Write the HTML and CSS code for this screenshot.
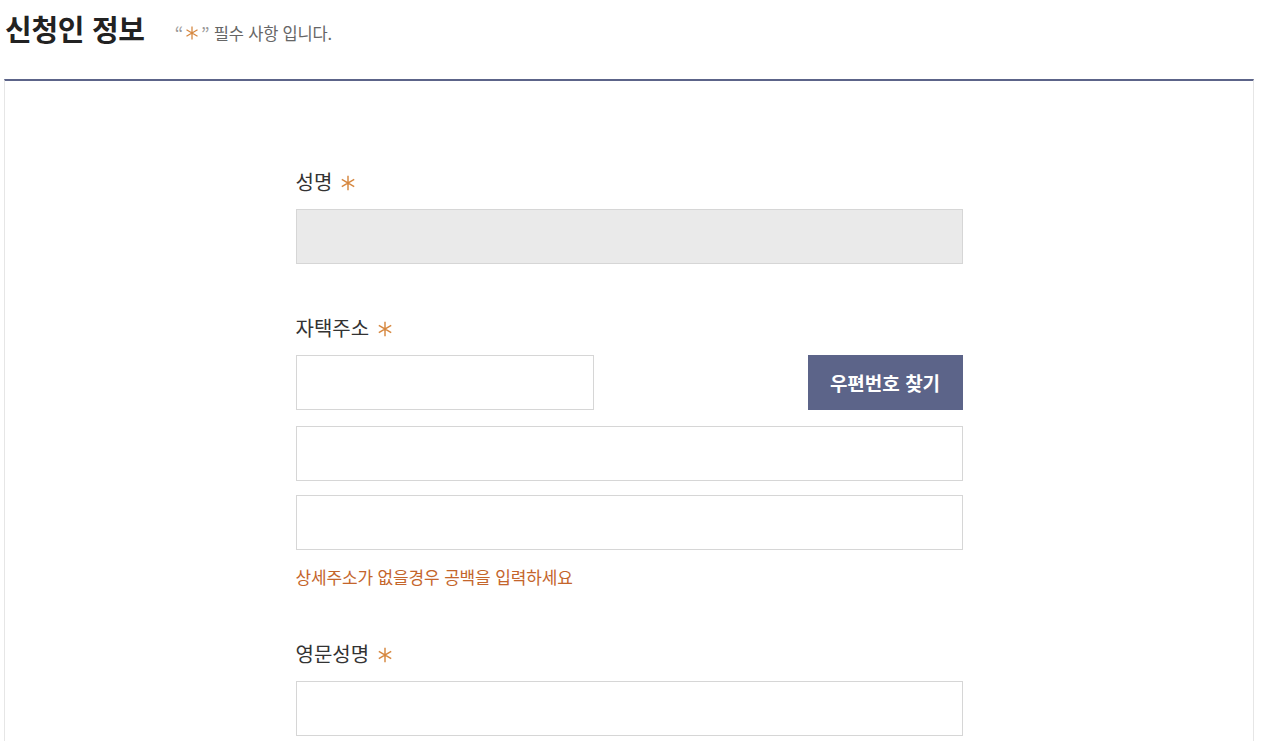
FILE: index.html
```html
<!DOCTYPE html>
<html lang="ko">
<head>
<meta charset="utf-8">
<title>신청인 정보</title>
<link rel="stylesheet" href="styles.css">
</head>
<body>
<div class="page">
  <div class="header">
    <h2 class="title">신청인 정보</h2>
    <span class="note"><span class="q">“</span><svg class="star small" viewBox="0 0 20 20"><path d="M10 2V18M3.1 6L16.9 14M3.1 14L16.9 6"/></svg><span class="q">”</span>&nbsp;필수 사항 입니다.</span>
  </div>
  <div class="box">
    <div class="form">
      <div class="field">
        <div class="label">성명 <svg class="star" viewBox="0 0 20 20"><path d="M10 2V18M3.1 6L16.9 14M3.1 14L16.9 6"/></svg></div>
        <div class="input disabled"></div>
      </div>
      <div class="field">
        <div class="label">자택주소 <svg class="star" viewBox="0 0 20 20"><path d="M10 2V18M3.1 6L16.9 14M3.1 14L16.9 6"/></svg></div>
        <div class="row">
          <div class="input zip"></div>
          <button class="btn" type="button">우편번호 찾기</button>
        </div>
        <div class="input addr1"></div>
        <div class="input addr2"></div>
        <p class="help">상세주소가 없을경우 공백을 입력하세요</p>
      </div>
      <div class="field">
        <div class="label">영문성명 <svg class="star" viewBox="0 0 20 20"><path d="M10 2V18M3.1 6L16.9 14M3.1 14L16.9 6"/></svg></div>
        <div class="input"></div>
      </div>
    </div>
  </div>
</div>
</body>
</html>
```
FILE: styles.css
```css
* { box-sizing: border-box; }
html, body { margin: 0; padding: 0; background: #fff; }
body {
  font-family: "Noto Sans CJK KR", "Noto Sans", "Liberation Sans", sans-serif;
  color: #333;
}
.page { width: 1265px; height: 741px; overflow: hidden; }
.header {
  height: 79px;
  padding: 7px 0 0 5px;
  display: flex;
  align-items: baseline;
}
.title {
  margin: 0;
  font-size: 29px;
  font-weight: 700;
  color: #222;
  letter-spacing: -0.3px;
  line-height: 42px;
}
.note {
  margin-left: 30px;
  font-size: 16.5px;
  color: #666;
  letter-spacing: -0.2px;
  display: inline-flex;
  align-items: center;
}
.note .q { color: #999; font-size: 18px; }
.star {
  width: 18px;
  height: 18px;
  fill: none;
  stroke: #d6873f;
  stroke-width: 1.6;
  vertical-align: -2px;
  margin-left: 1px;
}
.star.small { width: 16px; height: 16px; margin: 0 1px; vertical-align: 0; }
.box {
  margin-left: 4px;
  width: 1250px;
  height: 700px;
  border-top: 2px solid #5c6489;
  border-left: 1px solid #e6e6e6;
  border-right: 1px solid #e6e6e6;
  padding-top: 88px;
}
.form { width: 667px; margin: 0 auto; }
.field { margin-bottom: 51px; }
.label {
  font-size: 20px;
  line-height: 26px;
  color: #333;
  margin-bottom: 14px;
}
.input {
  height: 55px;
  border: 1px solid #d6d6d6;
  background: #fff;
}
.input.disabled { background: #eaeaea; }
.row { display: flex; justify-content: space-between; }
.input.zip { width: 298px; }
.btn {
  width: 155px;
  height: 55px;
  border: none;
  background: #5c6489;
  color: #fff;
  font-family: inherit;
  font-size: 19px;
  font-weight: 700;
  padding: 0;
}
.input.addr1 { margin-top: 16px; }
.input.addr2 { margin-top: 14px; }
.help {
  margin: 16px 0 0;
  font-size: 17px;
  line-height: 22px;
  color: #c4652b;
  letter-spacing: -0.15px;
}
.field:nth-child(2) { margin-bottom: 53px; }
```
